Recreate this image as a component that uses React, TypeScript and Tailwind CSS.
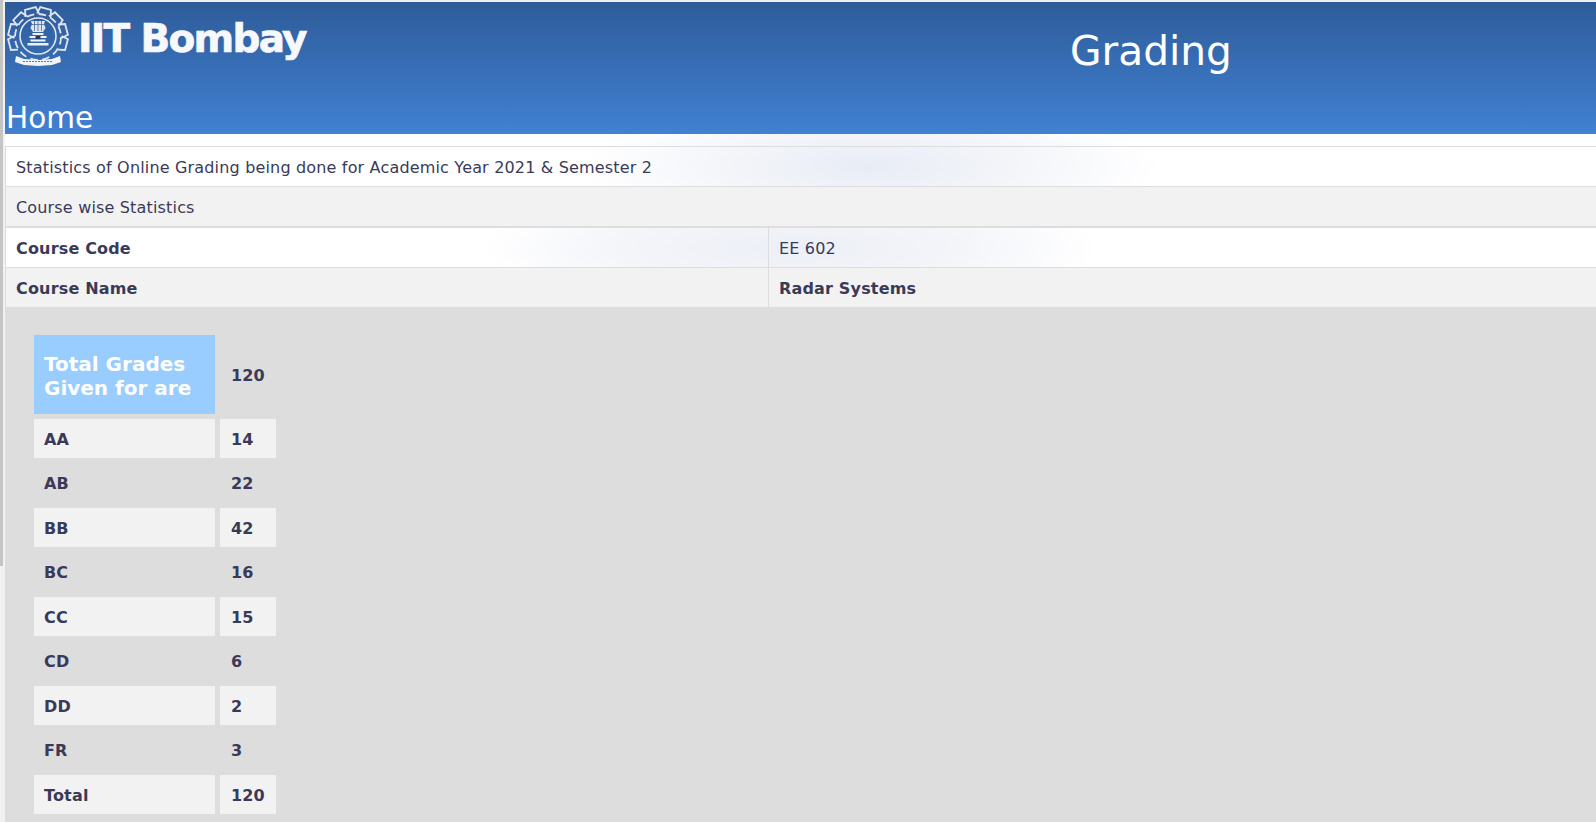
const FONT = "font-['DejaVu_Sans',_'Liberation_Sans',_sans-serif]";

function Seal() {
  const teeth = Array.from({ length: 12 }, (_, i) => (i * 360) / 12 + 15);
  return (
    <svg width="66" height="63" viewBox="0 0 66 63" className="shrink-0">
      <g fill="none" stroke="#dfe5ef">
        {teeth.map((a) =>
          a > 130 && a < 230 ? null : (
            <path key={a} d="M26 8.500 L27.500 1.500 H38.500 L40 8.500" strokeWidth="1.8" transform={`rotate(${a} 33 31)`} />
          ),
        )}
        <circle cx="33" cy="31" r="23" strokeWidth="1.8" strokeDasharray="7.500 4.540" />
        <circle cx="33" cy="30" r="18" strokeWidth="1.6" />
      </g>
      <path d="M26 15h14l-1 3 1.500 4-2.500 4H28l-2.500-4 1.500-4z" fill="#dfe5ef" />
      <path d="M26 18.500h14M29.500 15v10M33 15v10M36.500 15v10" stroke="#47699a" strokeWidth="0.8" />
      <path d="M27.500 27h11v2h-11zM24.500 30h17v2h-17zM25.500 33.500h15v2h-15zM22.500 37h21v2.500h-21z" fill="#eef1f6" />
      <path d="M30.500 30h5v3h-5z" fill="#23395f" />
      <path d="M11 50l8 3 14 1 14-1 8-3 1 6-9 3-14 1-14-1-9-3z" fill="#f0f3f8" />
      <path d="M18 55.500h30" stroke="#5d7aa6" strokeWidth="1" strokeDasharray="2 1" />
    </svg>
  );
}

function Logo() {
  return (
    <div className="flex items-start pt-[4px]">
      <Seal />
      <span className="ml-[7px] mt-[11px] text-[39px] font-bold leading-[44px] tracking-[-1.7px] text-[#f6f8fb] [-webkit-text-stroke:0.7px_#f6f8fb]">
        IIT Bombay
      </span>
    </div>
  );
}

const grades: [string, string][] = [
  ["AA", "14"],
  ["AB", "22"],
  ["BB", "42"],
  ["BC", "16"],
  ["CC", "15"],
  ["CD", "6"],
  ["DD", "2"],
  ["FR", "3"],
  ["Total", "120"],
];

export default function App() {
  return (
    <div className={`${FONT} relative h-[822px] w-[1596px] overflow-hidden bg-white text-[16px] tracking-[0.17px] text-[#3a3a58]`}>
      <div className="flex h-full">
        <div className="flex w-[5px] shrink-0 flex-col">
          <div className="flex h-[566px] w-full">
            <div className="w-[3px] bg-[#c4c4c4]" />
            <div className="w-[2px] bg-[#f1f1f1]" />
          </div>
          <div className="flex-1 bg-[#f1f1f1]" />
        </div>
        <div className="flex min-w-0 flex-1 flex-col">
          <div className="h-[2px] shrink-0 bg-[#f0f0f0]" />
          <header className="relative h-[132px] shrink-0 bg-gradient-to-b from-[#2e5c9a] to-[#4181d3]">
            <Logo />
            <h1 className="absolute left-[1065px] top-[24px] text-[40.700px] leading-[50px] font-normal tracking-normal text-white">Grading</h1>
            <a className="absolute left-[1px] top-[97px] text-[29.500px] leading-[38px] tracking-normal text-white">Home</a>
          </header>

          <div className="bg-[radial-gradient(ellipse_290px_70px_at_865px_32px,_#e8ecf5_0%,_#f3f5f9_50%,_#ffffff_100%)] pt-[12px]">
            <div className="flex h-[41px] items-center border-y border-l border-[#dddddd] pl-[10px] pt-[2px]">
              Statistics of Online Grading being done for Academic Year 2021 &amp; Semester 2
            </div>
          </div>
          <div className="flex h-[39px] items-center border-l border-[#dddddd] bg-[#f2f2f2] pl-[10px] pt-[2px]">Course wise Statistics</div>
          <div className="h-[2px] bg-[#dddddd]" />

          <div className="flex h-[39px] border-l border-[#dddddd] bg-[radial-gradient(ellipse_310px_60px_at_785px_20px,_#eceff6_0%,_#f3f5f9_55%,_#ffffff_100%)]">
            <div className="flex w-[762px] shrink-0 items-center pl-[10px] pt-[2px] font-bold">Course Code</div>
            <div className="flex flex-1 items-center border-l border-[#dddddd] pl-[10px] pt-[2px]">EE 602</div>
          </div>
          <div className="h-px bg-[#dddddd]" />
          <div className="flex h-[39px] border-l border-[#dddddd] bg-[#f2f2f2]">
            <div className="flex w-[762px] shrink-0 items-center pl-[10px] pt-[2px] font-bold">Course Name</div>
            <div className="flex flex-1 items-center border-l border-[#dddddd] pl-[10px] pt-[2px] font-bold">Radar Systems</div>
          </div>

          <main className="flex-1 bg-[#dddddd] pl-[29px] pt-[28px]">
            <div className="grid w-[242px] grid-cols-[181px_56px] gap-x-[5px] gap-y-[5px] font-bold">
              <div className="flex h-[79px] items-center bg-[#99ccff] pl-[10px] pt-[2px] text-[20px] leading-[24px] tracking-normal text-white">
                Total Grades
                <br />
                Given for are
              </div>
              <div className="flex h-[79px] items-center pl-[11px] pt-[2px]">120</div>
              {grades.map(([g, n], i) => (
                <div key={g} className="contents">
                  <div className={`flex items-center pl-[10px] pt-[2px] ${i % 2 === 0 ? "h-[39px] bg-[#f2f2f2]" : "h-[40px]"}`}>{g}</div>
                  <div className={`flex items-center pl-[11px] pt-[2px] ${i % 2 === 0 ? "h-[39px] bg-[#f2f2f2]" : "h-[40px]"}`}>{n}</div>
                </div>
              ))}
            </div>
          </main>
        </div>
      </div>
    </div>
  );
}
